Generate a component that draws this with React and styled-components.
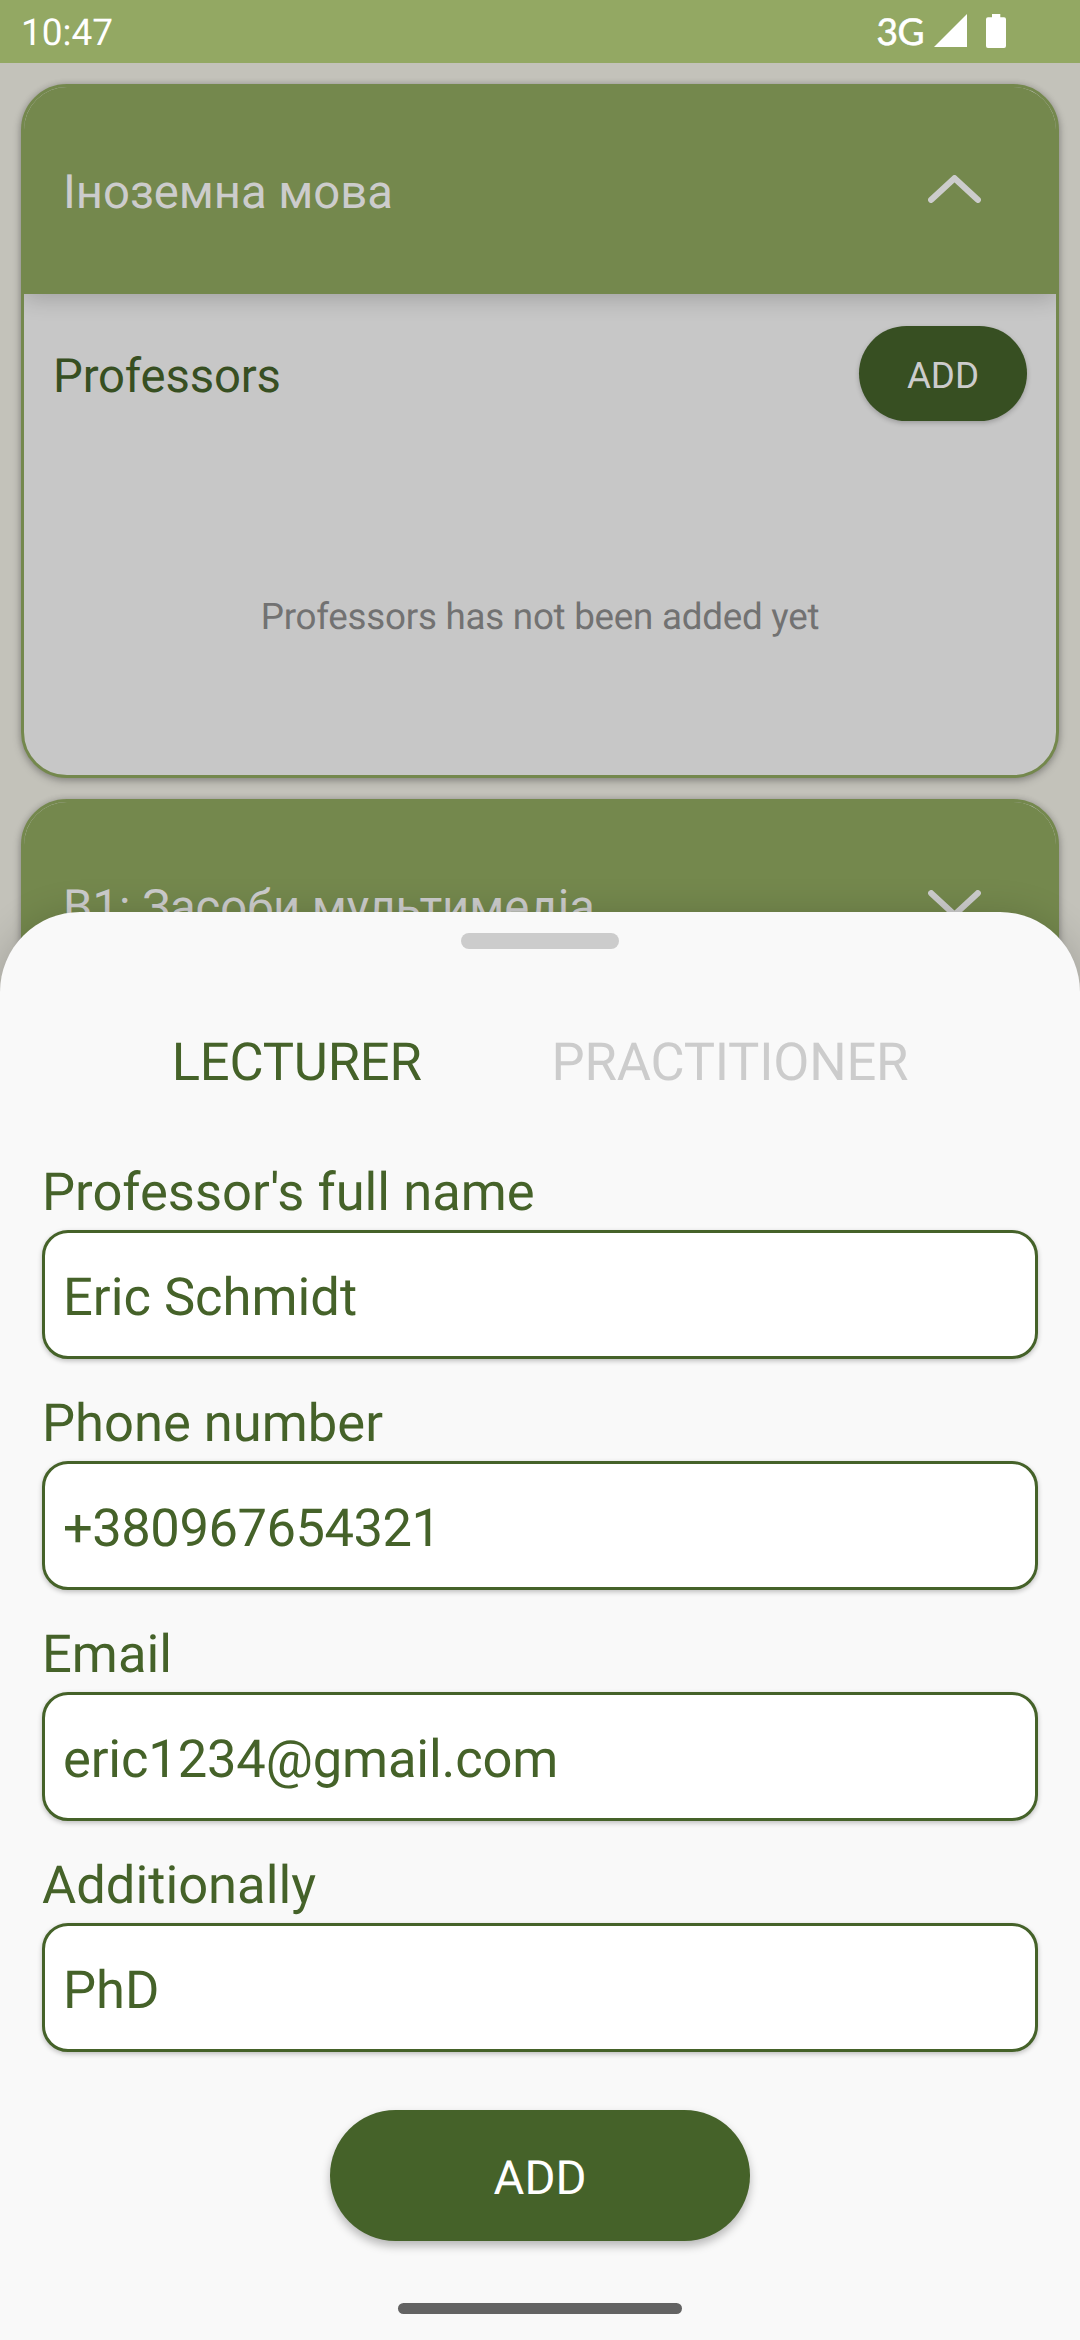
import React from "react";
import styled, { createGlobalStyle, css } from "styled-components";

const GlobalStyle = createGlobalStyle`
  * { box-sizing: border-box; }
  html, body { margin: 0; padding: 0; }
  body {
    font-family: Roboto, "Liberation Sans", sans-serif;
    background: #f9f9f9;
    text-rendering: geometricPrecision;
  }
`;

const Screen = styled.div`
  position: relative;
  width: 1080px;
  height: 2340px;
  overflow: hidden;
  background: #c3c2ba;
`;

const StatusBar = styled.header`
  display: flex;
  align-items: flex-start;
  justify-content: space-between;
  height: 63px;
  padding: 0 74px 0 21px;
  background: #93a863;
  color: #ffffff;
`;

const Clock = styled.span`
  padding-top: 12px;
  font-size: 37px;
  line-height: 44px;
`;

const StatusIcons = styled.div`
  display: flex;
  align-items: flex-start;
`;

const Network = styled.span`
  padding: 8px 10px 0 0;
  font-family: Lato, Roboto, sans-serif;
  font-size: 37px;
  line-height: 46px;
  font-weight: 400;
  letter-spacing: -0.5px;
  -webkit-text-stroke: 0.6px #ffffff;
`;

const SignalIcon = styled.svg`
  display: block;
  width: 33px;
  height: 33px;
  margin: 14px 19px 0 0;
`;

const BatteryIcon = styled.svg`
  display: block;
  width: 20px;
  height: 34px;
  margin-top: 14px;
`;

const CourseList = styled.main`
  display: flex;
  flex-direction: column;
  gap: 21px;
  padding: 21px;
`;

const Card = styled.section`
  height: ${(p) => p.$height}px;
  border: 3px solid #74884d;
  border-radius: 46px;
  background: #c7c7c7;
  overflow: hidden;
  box-shadow: 0 3px 8px rgba(0, 0, 0, 0.26), 0 0 6px rgba(0, 0, 0, 0.14);
`;

const CardHeader = styled.div`
  display: flex;
  align-items: center;
  justify-content: space-between;
  height: 207px;
  padding: 0 75px 3px 39px;
  background: #74884d;
  color: #cccccc;
  box-shadow: 0 4px 22px rgba(0, 0, 0, 0.2);
`;

const CardTitle = styled.h2`
  margin: 0;
  padding-top: 6px;
  font-size: 47.25px;
  line-height: 56px;
  font-weight: 400;
  letter-spacing: -0.05px;
`;

const ChevronIcon = styled.svg`
  display: block;
  width: 53px;
  height: 28px;
  fill: none;
  stroke: currentColor;
  stroke-width: 6.2;
  stroke-linecap: round;
  stroke-linejoin: round;
  ${(p) => p.$down && css`transform: rotate(180deg);`}
`;

const SectionRow = styled.div`
  display: flex;
  align-items: center;
  justify-content: space-between;
  padding: 32px 29px 0;
`;

const SectionTitle = styled.h3`
  margin: 0;
  padding-top: 5px;
  color: #374f22;
  font-size: 47.25px;
  line-height: 56px;
  font-weight: 400;
  letter-spacing: -0.15px;
`;

const Pill = styled.button`
  display: flex;
  align-items: center;
  justify-content: center;
  margin: 0;
  border: 0;
  border-radius: 999px;
  font-family: inherit;
  font-weight: 400;
  text-rendering: inherit;
`;

const SmallAdd = styled(Pill)`
  width: 168px;
  height: 95px;
  padding: 4px 0 0;
  background: #374f22;
  color: #cccccc;
  font-size: 36.75px;
  line-height: 44px;
  box-shadow: 0 2px 5px rgba(0, 0, 0, 0.22);
`;

const EmptyMessage = styled.p`
  margin: 174px 0 0;
  color: #727272;
  font-size: 36.75px;
  line-height: 44px;
  letter-spacing: -0.25px;
  text-align: center;
`;

const Sheet = styled.div`
  position: absolute;
  left: 0;
  right: 0;
  bottom: 0;
  height: 1428px;
  display: flex;
  flex-direction: column;
  align-items: center;
  padding: 21px 42px 0;
  border-radius: 80px 80px 0 0;
  background: #f9f9f9;
  color: #456229;
  box-shadow: 0 6px 40px rgba(0, 0, 0, 0.2);
`;

const Handle = styled.div`
  width: 158px;
  height: 16px;
  border-radius: 8px;
  background: #cccccc;
`;

const Tabs = styled.nav`
  display: flex;
  gap: 130px;
  margin-top: 82px;
`;

const Tab = styled.span`
  color: ${(p) => (p.$active ? "#456229" : "#cccccc")};
  font-size: 52.5px;
  line-height: 62px;
  letter-spacing: -0.2px;
`;

const Form = styled.div`
  display: flex;
  flex-direction: column;
  gap: 33px;
  width: 100%;
  margin-top: 68px;
`;

const Field = styled.div`
  display: flex;
  flex-direction: column;
  gap: 7px;
  font-size: 52.5px;
  line-height: 62px;
`;

const FieldLabel = styled.span``;

const FieldBox = styled.div`
  display: flex;
  align-items: center;
  height: 129px;
  padding: 5px 18px 0;
  border: 3px solid #456229;
  border-radius: 26px;
  background: #ffffff;
  letter-spacing: ${(p) => p.$tracking || 0}px;
  box-shadow: 0 2px 5px rgba(0, 0, 0, 0.24);
`;

const SubmitButton = styled(Pill)`
  width: 420px;
  height: 131px;
  margin-top: 58px;
  padding: 5px 0 0;
  background: #456229;
  color: #ffffff;
  font-size: 47.25px;
  line-height: 56px;
  box-shadow: 0 5px 10px rgba(0, 0, 0, 0.27);
`;

const HomeIndicator = styled.div`
  width: 284px;
  height: 11px;
  margin-top: 62px;
  border-radius: 6px;
  background: #636363;
`;

const Chevron = ({ down }) => (
  <ChevronIcon $down={down} viewBox="0 0 53 28">
    <path d="M3.2 24.8 L26.5 3.2 L49.8 24.8" />
  </ChevronIcon>
);

const fields = [
  { label: "Professor's full name", value: "Eric Schmidt" },
  { label: "Phone number", value: "+380967654321", tracking: -0.48 },
  { label: "Email", value: "eric1234@gmail.com", tracking: -0.15 },
  { label: "Additionally", value: "PhD" },
];

export default function App() {
  return (
    <>
      <GlobalStyle />
      <Screen>
        <StatusBar>
          <Clock>10:47</Clock>
          <StatusIcons>
            <Network>3G</Network>
            <SignalIcon viewBox="0 0 33 33">
              <path d="M0 33 L33 0 V33 Z" fill="#fff" />
            </SignalIcon>
            <BatteryIcon viewBox="0 0 20 34">
              <path
                d="M6 0 H14.3 V3.3 H18 Q20 3.3 20 5.3 V32 Q20 34 18 34 H2 Q0 34 0 32 V5.3 Q0 3.3 2 3.3 H6 Z"
                fill="#fff"
              />
            </BatteryIcon>
          </StatusIcons>
        </StatusBar>

        <CourseList>
          <Card $height={694}>
            <CardHeader>
              <CardTitle>Іноземна мова</CardTitle>
              <Chevron />
            </CardHeader>
            <SectionRow>
              <SectionTitle>Professors</SectionTitle>
              <SmallAdd>ADD</SmallAdd>
            </SectionRow>
            <EmptyMessage>Professors has not been added yet</EmptyMessage>
          </Card>
          <Card $height={210}>
            <CardHeader>
              <CardTitle>В1: Засоби мультимедіа</CardTitle>
              <Chevron down />
            </CardHeader>
          </Card>
        </CourseList>

        <Sheet>
          <Handle />
          <Tabs>
            <Tab $active>LECTURER</Tab>
            <Tab>PRACTITIONER</Tab>
          </Tabs>
          <Form>
            {fields.map((field) => (
              <Field key={field.label}>
                <FieldLabel>{field.label}</FieldLabel>
                <FieldBox $tracking={field.tracking}>{field.value}</FieldBox>
              </Field>
            ))}
          </Form>
          <SubmitButton>ADD</SubmitButton>
          <HomeIndicator />
        </Sheet>
      </Screen>
    </>
  );
}
